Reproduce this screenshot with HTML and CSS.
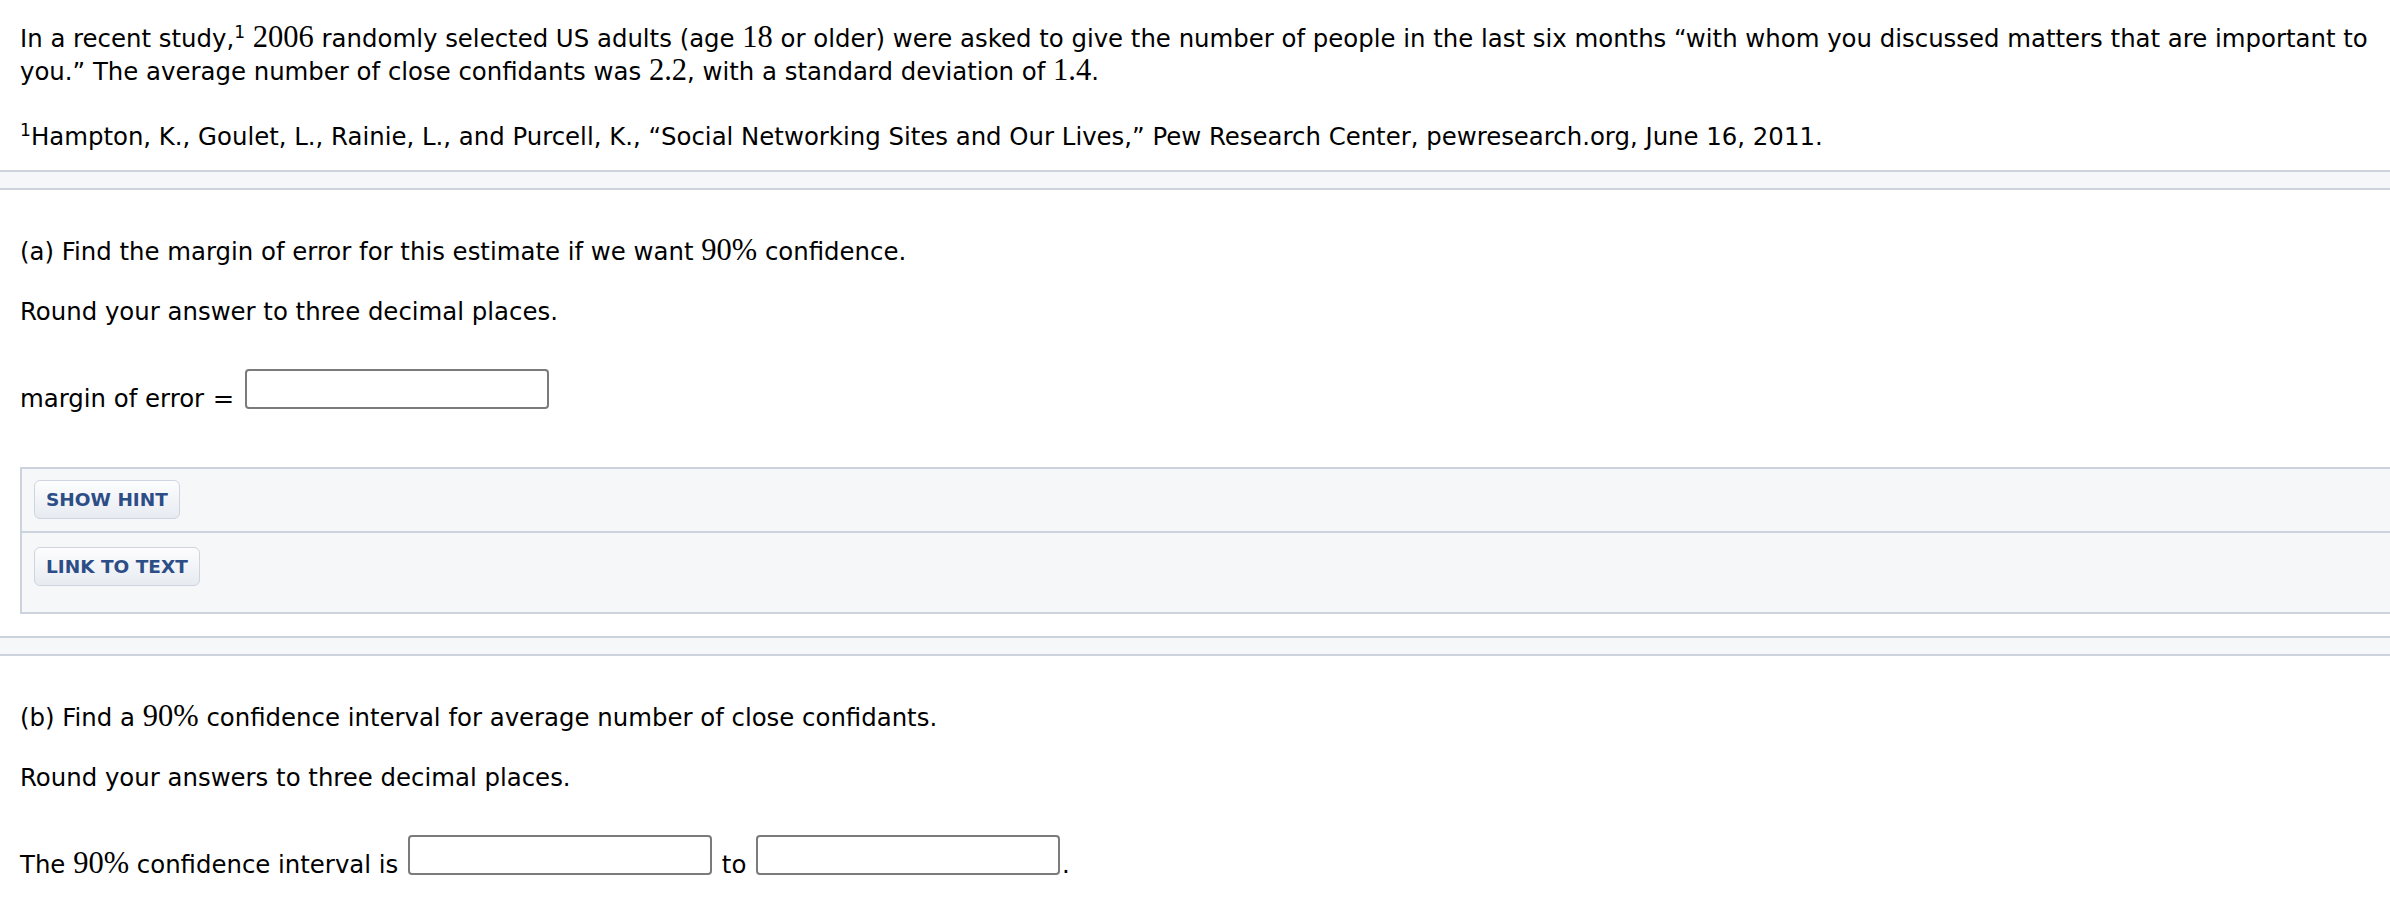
FILE: index.html
```html
<!DOCTYPE html>
<html lang="en">
<head>
<meta charset="utf-8">
<title>Close confidants</title>
<link rel="stylesheet" href="styles.css">
</head>
<body>
<div class="stem">
  <p class="intro">In a recent study,<sup class="fn">1</sup> <span class="m">2006</span> randomly selected US adults (age <span class="m">18</span> or older) were asked to give the number of people in the last six months “with whom you discussed matters that are important to you.” The average number of close confidants was <span class="m">2.2</span>, with a standard deviation of <span class="m">1.4</span>.</p>
  <p class="footnote"><sup class="fn">1</sup>Hampton, K., Goulet, L., Rainie, L., and Purcell, K., “Social Networking Sites and Our Lives,” Pew Research Center, pewresearch.org, June 16, 2011.</p>
</div>

<div class="band"></div>

<section class="part">
  <p class="question">(a) Find the margin of error for this estimate if we want <span class="m">90%</span> confidence.</p>
  <p class="instr">Round your answer to three decimal places.</p>
  <p class="answer">margin of error <span class="eq">=</span> <input class="box" type="text" aria-label="margin of error"></p>
</section>

<div class="panel">
  <div class="panel-row first"><button class="btn" type="button">SHOW HINT</button></div>
  <div class="panel-row last"><button class="btn" type="button">LINK TO TEXT</button></div>
</div>

<div class="band band2"></div>

<section class="part">
  <p class="question">(b) Find a <span class="m">90%</span> confidence interval for average number of close confidants.</p>
  <p class="instr">Round your answers to three decimal places.</p>
  <p class="answer interval">The <span class="m">90%</span> confidence interval is <input class="box" type="text" aria-label="lower bound"> to <input class="box" type="text" aria-label="upper bound">.</p>
</section>
</body>
</html>
```

FILE: styles.css
```css
html, body {
  margin: 0;
  padding: 0;
  background: #ffffff;
  overflow-x: hidden;
}

body {
  font-family: "DejaVu Sans", Verdana, sans-serif;
  font-size: 24.4px;
  line-height: 33px;
  color: #000000;
}

p {
  margin: 0;
}

.stem {
  padding: 22px 8px 0 20px;
}

.footnote {
  margin-top: 32px;
}

.fn {
  font-size: 0.7em;
  line-height: 0;
  vertical-align: 0.55em;
}

.m {
  font-family: "Liberation Serif", "Times New Roman", serif;
  font-size: 1.25em;
  line-height: 0;
}

.band {
  margin-top: 17px;
  height: 16px;
  background: #f6f7f9;
  border-top: 2px solid #cdd3dd;
  border-bottom: 2px solid #cdd3dd;
}

.band2 {
  margin-top: 22px;
}

.part {
  padding: 0 20px;
}

.question {
  margin-top: 45px;
}

.instr {
  margin-top: 27px;
}

.answer {
  margin-top: 41px;
}

.eq {
  font-family: "DejaVu Sans", Verdana, sans-serif;
  font-size: 1.05em;
  margin: 0 1px;
}

.box {
  box-sizing: border-box;
  width: 304px;
  height: 40px;
  margin: 0 2px 4px;
  padding: 0 6px;
  border: 2px solid #7b7b7b;
  border-radius: 4px;
  background: #ffffff;
  font: inherit;
  vertical-align: text-bottom;
}

.panel {
  margin: 52px 0 0 20px;
  background: #f6f7f9;
  border: 2px solid #cdd3dd;
  border-right: none;
}

.panel-row.first {
  padding: 11px 12px 12px;
  border-bottom: 2px solid #cdd3dd;
}

.panel-row.last {
  padding: 14px 12px 26px;
}

.btn {
  display: inline-block;
  box-sizing: border-box;
  height: 39px;
  padding: 0 11px;
  font-family: "DejaVu Sans", Verdana, sans-serif;
  font-size: 18.5px;
  font-weight: bold;
  color: #2c4d86;
  background: linear-gradient(#fdfdfe, #e7ebf1);
  border: 1.5px solid #cfd5df;
  border-radius: 6px;
  cursor: pointer;
}

.interval {
  margin-top: 41px;
}
```
